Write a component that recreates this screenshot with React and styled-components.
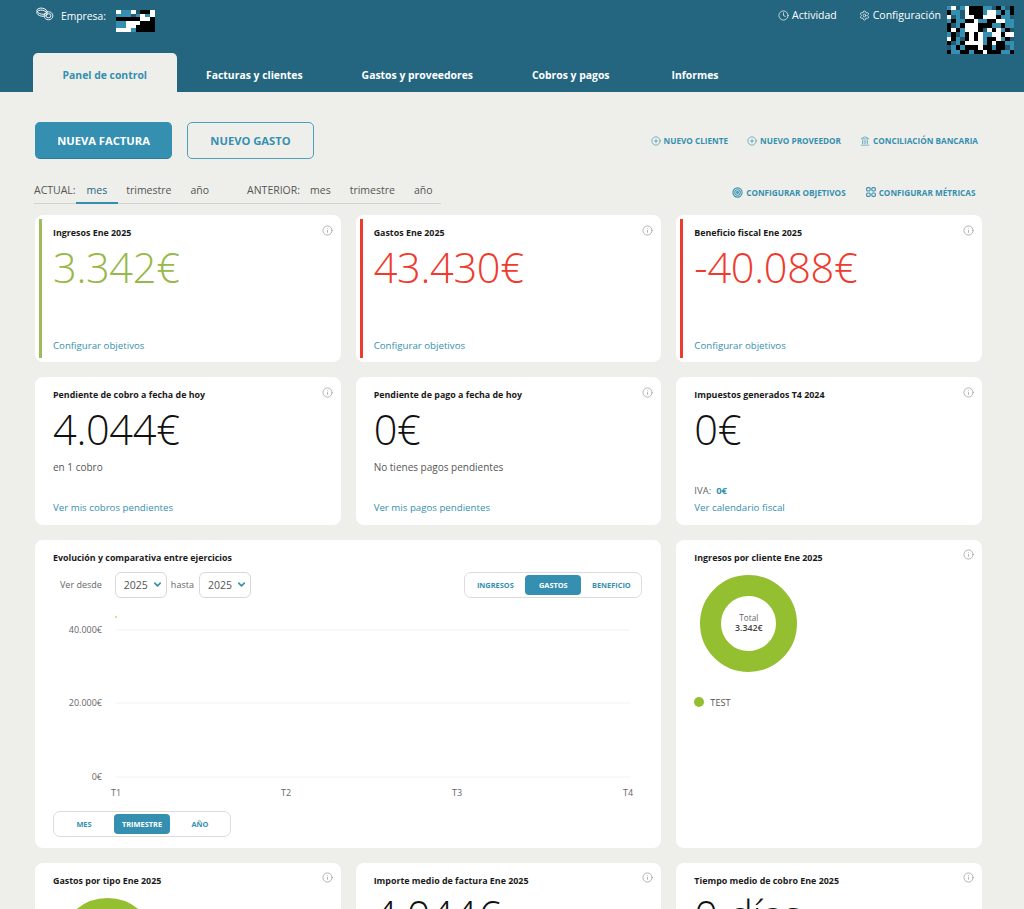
import React from "react";
import styled, { createGlobalStyle } from "styled-components";
import { Clock, Settings, CirclePlus, Landmark, Target, Info, ChevronDown } from "lucide-react";

const Global = createGlobalStyle`
  html, body { margin: 0; padding: 0; background: #eeefea; }
  * { box-sizing: border-box; }
  body { font-family: "Open Sans", "Liberation Sans", sans-serif; color: #222; }
`;

const PRIMARY = "#358fb0";
const HEADER = "#24667f";

const Page = styled.div`
  height: 909px;
  overflow: hidden;
  background: #eeefea;
`;
const Header = styled.header`
  height: 92px;
  background: ${HEADER};
  display: flex;
  flex-direction: column;
`;
const TopBar = styled.div`
  height: 53px;
  display: flex;
  justify-content: space-between;
  align-items: flex-start;
  padding: 6px 10px 0 36px;
  color: #fff;
  font-size: 10.5px;
`;
const CompanyArea = styled.div`
  display: flex;
  align-items: flex-start;
`;
const CompanyLabel = styled.span`
  margin: 3px 10px 0 7px;
  font-size: 10.3px;
  line-height: 14px;
`;
const CoinsSvg = styled.svg`
  margin-top: 1px;
`;
const UserArea = styled.div`
  display: flex;
  align-items: flex-start;
`;
const TopLink = styled.a`
  display: flex;
  align-items: center;
  gap: 3px;
  margin: 2px 0 0 ${(p) => p.$gap}px;
  line-height: 14px;
  color: #fff;
`;
const Mosaic = styled.svg`
  display: block;
  flex: none;
  margin: ${(p) => p.$margin};
`;
const Tabs = styled.nav`
  display: flex;
  height: 39px;
  padding-left: 33px;
`;
const Tab = styled.a`
  display: flex;
  align-items: center;
  padding: 4px 29.5px 0;
  font-size: 10.4px;
  font-weight: 700;
  border-radius: 5px 5px 0 0;
  color: ${(p) => (p.$active ? PRIMARY : "#fff")};
  background: ${(p) => (p.$active ? "#eeefea" : "transparent")};
  &:last-child {
    padding-left: 32.5px;
  }
`;
const Main = styled.main`
  padding: 30px 42px 0 35px;
`;
const ActionRow = styled.div`
  display: flex;
  align-items: center;
  justify-content: space-between;
  height: 37px;
`;
const ButtonGroup = styled.div`
  display: flex;
  gap: 15px;
`;
const BigButton = styled.button`
  height: 37px;
  width: ${(p) => p.$width}px;
  border-radius: 5px;
  border: 1px solid ${(p) => (p.$filled ? PRIMARY : "#4f9fbc")};
  border-bottom-color: ${(p) => (p.$filled ? "#2c7d9b" : "#4f9fbc")};
  font-family: inherit;
  font-size: 11.2px;
  font-weight: 700;
  padding: 0;
  color: ${(p) => (p.$filled ? "#fff" : PRIMARY)};
  background: ${(p) => (p.$filled ? PRIMARY : "transparent")};
`;
const QuickLinks = styled.div`
  display: flex;
  gap: ${(p) => p.$gap}px;
  padding-right: ${(p) => p.$right}px;
  margin-top: ${(p) => p.$top || 0}px;
`;
const QuickLink = styled.a`
  display: flex;
  align-items: center;
  gap: 3px;
  font-size: 8.2px;
  font-weight: 700;
  color: ${PRIMARY};
`;
const FilterRow = styled.div`
  display: flex;
  align-items: center;
  justify-content: space-between;
  height: 27px;
  margin: 18px 0 11px;
`;
const Periods = styled.div`
  display: flex;
  align-items: stretch;
  width: 407px;
  margin-left: -1px;
  height: 27px;
  border-bottom: 1px solid #d2d3ce;
  font-size: 10.5px;
  color: #555;
`;
const PeriodLabel = styled.span`
  display: flex;
  align-items: center;
  margin-left: ${(p) => p.$offset || 0}px;
  margin-right: ${(p) => p.$after || 0}px;
`;
const Period = styled.a`
  display: flex;
  align-items: center;
  padding: 0 11px;
  margin-bottom: -1px;
  color: ${(p) => (p.$active ? HEADER : "#555")};
  border-bottom: 2px solid ${(p) => (p.$active ? PRIMARY : "transparent")};
  & + & {
    margin-left: -3px;
  }
`;
const Grid = styled.div`
  display: grid;
  grid-template-columns: repeat(3, 1fr);
  gap: 15px;
`;
const Card = styled.section`
  position: relative;
  grid-column: span ${(p) => p.$span || 1};
  height: ${(p) => p.$height || 147}px;
  background: #fff;
  border-radius: 8px;
  padding: 11px 18px 9.5px;
  display: flex;
  flex-direction: column;
`;
const Accent = styled.span`
  position: absolute;
  left: 4px;
  top: 4px;
  bottom: 4px;
  width: 3px;
  background: ${(p) => p.$color};
`;
const InfoBadge = styled.span`
  position: absolute;
  right: 8px;
  top: 9.5px;
  display: flex;
  color: #9a9a9a;
`;
const CardTitle = styled.h3`
  margin: 0;
  font-size: 8.9px;
  font-weight: 700;
  line-height: 13px;
  color: #1a1a1a;
`;
const BigValue = styled.div`
  margin-top: 0;
  font-size: 41.5px;
  font-weight: 300;
  line-height: 56px;
  letter-spacing: -0.3px;
  color: ${(p) => p.$color || "#111"};
`;
const Note = styled.p`
  margin: 3px 0 0;
  font-size: 10px;
  line-height: 14px;
  color: #555;
`;
const CardFooter = styled.div`
  margin-top: auto;
  display: flex;
  flex-direction: column;
  gap: 3px;
`;
const TaxLine = styled.div`
  display: flex;
  gap: 5px;
  font-size: 9.5px;
  line-height: 14px;
  color: #666;
`;
const TaxValue = styled.b`
  color: ${PRIMARY};
  font-weight: 700;
`;
const CardLink = styled.a`
  font-size: 9.7px;
  line-height: 14px;
  color: ${PRIMARY};
`;
const Controls = styled.div`
  display: flex;
  align-items: center;
  justify-content: space-between;
  margin-top: 8px;
  padding-right: 1px;
`;
const Range = styled.div`
  display: flex;
  align-items: center;
  font-size: 9px;
  color: #666;
`;
const RangeText = styled.span`
  margin: ${(p) => p.$margin};
`;
const SelectBox = styled.div`
  display: flex;
  align-items: center;
  justify-content: space-between;
  width: 52px;
  height: 26px;
  padding: 0 3px 0 8px;
  border: 1px solid #d8d8d8;
  border-radius: 6px;
  font-size: 10.5px;
  color: #555;
`;
const Segmented = styled.div`
  display: grid;
  grid-template-columns: repeat(3, 1fr);
  width: 178px;
  height: 26px;
  padding: 2px 1px;
  border: 1.5px solid #dcdcdc;
  border-radius: 7px;
`;
const Segment = styled.a`
  display: flex;
  align-items: center;
  justify-content: center;
  margin: 0 1px;
  border-radius: 4px;
  font-size: 7.4px;
  font-weight: 700;
  color: ${(p) => (p.$active ? "#fff" : PRIMARY)};
  background: ${(p) => (p.$active ? PRIMARY : "transparent")};
`;
const Chart = styled.svg`
  display: block;
  margin-top: 12px;
  margin-bottom: 11px;
  flex: none;
  font-family: "Open Sans", "Liberation Sans", sans-serif;
`;
const Donut = styled.div`
  width: 97px;
  height: 97px;
  margin: ${(p) => p.$margin};
  flex: none;
  border: 21px solid #93bf30;
  border-radius: 50%;
  display: flex;
  flex-direction: column;
  align-items: center;
  justify-content: center;
`;
const DonutLabel = styled.span`
  font-size: 8.2px;
  line-height: 11px;
  color: #666;
`;
const DonutTotal = styled.span`
  font-size: 8.8px;
  font-weight: 600;
  line-height: 11px;
  color: #444;
`;
const Legend = styled.div`
  display: flex;
  align-items: center;
  gap: 6px;
  margin-top: 24px;
  font-size: 9.2px;
  color: #555;
`;
const LegendDot = styled.span`
  width: 10px;
  height: 10px;
  border-radius: 50%;
  background: #93bf30;
`;

const COLORS = { t: "#358fb0", b: "#000", w: "#fff", ".": "transparent", d: "#1f5b73" };

function Pixels({ rows, width, height, margin }) {
  const cols = rows[0].length;
  return (
    <Mosaic $margin={margin} width={width} height={height} viewBox={`0 0 ${cols} ${rows.length}`} preserveAspectRatio="none" shapeRendering="crispEdges" aria-hidden="true">
      {rows.flatMap((row, y) =>
        row.split("").map((c, x) => <rect key={`${x}-${y}`} x={x} y={y} width="1.02" height="1.02" fill={COLORS[c]} />)
      )}
    </Mosaic>
  );
}

const AVATAR = [
  "twdtwbbbttdbtdb",
  "bttdwbbbtwwtbtb",
  "wdtdwwbbwwwbttd",
  "tbttbbwttbbwwtt",
  "bdtbwwwbbbttbtt",
  "bwbtwwwbdwbwtbd",
  "tbdtbwbwttwwbww",
  "wbtdbwbwtbbwtbd",
  "bdtbwwwwtbwbbtt",
  "dtbtbbbwbbtbbdt",
  "bttbbtbbwbbbttb",
];
const COMPANY = [
  "wttwdbbw",
  "tttdtwtw",
  "bbbbbwwb",
  "ttwwwbbb",
  "ttwwbbbb",
  "wwwtbbbb",
];

function Coins() {
  return (
    <CoinsSvg width="18" height="14" viewBox="0 0 18 14" fill="none" stroke="#fff" strokeWidth="0.9" aria-hidden="true">
      <ellipse cx="6" cy="4.2" rx="5.2" ry="3" transform="rotate(10 6 4.2)" />
      <ellipse cx="6" cy="6.2" rx="5.2" ry="3" transform="rotate(10 6 6.2)" />
      <ellipse cx="12.5" cy="8.8" rx="4.4" ry="4" />
      <ellipse cx="12.5" cy="8.8" rx="2.4" ry="2.1" />
    </CoinsSvg>
  );
}

function MetricsIcon() {
  return (
    <svg width="10" height="10" viewBox="0 0 10 10" fill="none" stroke="currentColor" strokeWidth="1.1" aria-hidden="true">
      <rect x="0.6" y="0.6" width="3.6" height="3.4" rx="1.2" />
      <rect x="5.8" y="0.6" width="3.6" height="3.4" rx="1.2" />
      <rect x="0.6" y="6" width="3.6" height="3.4" rx="1.2" />
      <rect x="5.8" y="6" width="3.6" height="3.4" rx="1.2" />
    </svg>
  );
}

function MetricCard({ title, value, color, accent, note, footer, tax, height }) {
  return (
    <Card $height={height}>
      {accent && <Accent $color={accent} />}
      <InfoBadge><Info size={11} strokeWidth={1.6} /></InfoBadge>
      <CardTitle>{title}</CardTitle>
      <BigValue $color={color}>{value}</BigValue>
      {note && <Note>{note}</Note>}
      {footer && (
        <CardFooter>
          {tax && <TaxLine>IVA: <TaxValue>{tax}</TaxValue></TaxLine>}
          <CardLink>{footer}</CardLink>
        </CardFooter>
      )}
    </Card>
  );
}

function Seg({ items, active }) {
  return (
    <Segmented>
      {items.map((i) => <Segment key={i} $active={i === active}>{i}</Segment>)}
    </Segmented>
  );
}

function Select({ value }) {
  return (
    <SelectBox>
      {value}
      <ChevronDown size={11} strokeWidth={3.5} color={PRIMARY} />
    </SelectBox>
  );
}

function EvolutionChart() {
  const ys = [{ y: 20, t: "40.000€" }, { y: 93, t: "20.000€" }, { y: 167, t: "0€" }];
  const xs = [{ x: 63, t: "T1" }, { x: 233, t: "T2" }, { x: 404, t: "T3" }, { x: 575, t: "T4" }];
  return (
    <Chart width="590" height="190" viewBox="0 0 590 190" role="img">
      {ys.map((l) => (
        <g key={l.t}>
          <line x1="63" x2="577" y1={l.y} y2={l.y} stroke="#f2f2f0" strokeWidth="1" />
          <text x="49" y={l.y + 3} textAnchor="end" fontSize="9" fill="#666">{l.t}</text>
        </g>
      ))}
      {xs.map((l) => (
        <text key={l.t} x={l.x} y="186" textAnchor="middle" fontSize="9" fill="#666">{l.t}</text>
      ))}
      <circle cx="63" cy="7" r="0.8" fill="#93bf30" />
    </Chart>
  );
}

export default function App() {
  return (
    <Page>
      <Global />
      <Header>
        <TopBar>
          <CompanyArea>
            <Coins />
            <CompanyLabel>Empresa:</CompanyLabel>
            <Pixels rows={COMPANY} width={39} height={22} margin="4px 0 0 0" />
          </CompanyArea>
          <UserArea>
            <TopLink $gap={0}><Clock size={11} strokeWidth={1.5} /> Actividad</TopLink>
            <TopLink $gap={22}><Settings size={11} strokeWidth={1.5} /> Configuración</TopLink>
            <Pixels rows={AVATAR} width={67} height={48} margin="0 0 0 6px" />
          </UserArea>
        </TopBar>
        <Tabs>
          <Tab $active>Panel de control</Tab>
          <Tab>Facturas y clientes</Tab>
          <Tab>Gastos y proveedores</Tab>
          <Tab>Cobros y pagos</Tab>
          <Tab>Informes</Tab>
        </Tabs>
      </Header>
      <Main>
        <ActionRow>
          <ButtonGroup>
            <BigButton $filled $width={137}>NUEVA FACTURA</BigButton>
            <BigButton $width={127}>NUEVO GASTO</BigButton>
          </ButtonGroup>
          <QuickLinks $gap={19} $right={4}>
            <QuickLink><CirclePlus size={10} strokeWidth={1.5} /> NUEVO CLIENTE</QuickLink>
            <QuickLink><CirclePlus size={10} strokeWidth={1.5} /> NUEVO PROVEEDOR</QuickLink>
            <QuickLink><Landmark size={10} strokeWidth={1.5} /> CONCILIACIÓN BANCARIA</QuickLink>
          </QuickLinks>
        </ActionRow>
        <FilterRow>
          <Periods>
            <PeriodLabel>ACTUAL:</PeriodLabel>
            <Period $active>mes</Period>
            <Period>trimestre</Period>
            <Period>año</Period>
            <PeriodLabel $offset={27} $after={-1}>ANTERIOR:</PeriodLabel>
            <Period>mes</Period>
            <Period>trimestre</Period>
            <Period>año</Period>
          </Periods>
          <QuickLinks $gap={20} $right={6.5} $top={3}>
            <QuickLink><Target size={11} strokeWidth={2.4} /> CONFIGURAR OBJETIVOS</QuickLink>
            <QuickLink><MetricsIcon /> CONFIGURAR MÉTRICAS</QuickLink>
          </QuickLinks>
        </FilterRow>
        <Grid>
          <MetricCard title="Ingresos Ene 2025" value="3.342€" color="#97b84a" accent="#9fbc5a" footer="Configurar objetivos" />
          <MetricCard title="Gastos Ene 2025" value="43.430€" color="#ef3b2d" accent="#ef3b2d" footer="Configurar objetivos" />
          <MetricCard title="Beneficio fiscal Ene 2025" value="-40.088€" color="#ef3b2d" accent="#ef3b2d" footer="Configurar objetivos" />
          <MetricCard height={147.5} title="Pendiente de cobro a fecha de hoy" value="4.044€" note="en 1 cobro" footer="Ver mis cobros pendientes" />
          <MetricCard height={147.5} title="Pendiente de pago a fecha de hoy" value="0€" note="No tienes pagos pendientes" footer="Ver mis pagos pendientes" />
          <MetricCard height={147.5} title="Impuestos generados T4 2024" value="0€" tax="0€" footer="Ver calendario fiscal" />
          <Card $span={2} $height={308}>
            <CardTitle>Evolución y comparativa entre ejercicios</CardTitle>
            <Controls>
              <Range>
                <RangeText $margin="0 13px 0 7px">Ver desde</RangeText>
                <Select value="2025" />
                <RangeText $margin="0 5px 0 4px">hasta</RangeText>
                <Select value="2025" />
              </Range>
              <Seg items={["INGRESOS", "GASTOS", "BENEFICIO"]} active="GASTOS" />
            </Controls>
            <EvolutionChart />
            <Seg items={["MES", "TRIMESTRE", "AÑO"]} active="TRIMESTRE" />
          </Card>
          <Card $height={308}>
            <InfoBadge><Info size={11} strokeWidth={1.6} /></InfoBadge>
            <CardTitle>Ingresos por cliente Ene 2025</CardTitle>
            <Donut $margin="11px 0 0 6px">
              <DonutLabel>Total</DonutLabel>
              <DonutTotal>3.342€</DonutTotal>
            </Donut>
            <Legend><LegendDot /> TEST</Legend>
          </Card>
          <Card>
            <InfoBadge><Info size={11} strokeWidth={1.6} /></InfoBadge>
            <CardTitle>Gastos por tipo Ene 2025</CardTitle>
            <Donut $margin="11px 0 0 6px" />
          </Card>
          <MetricCard title="Importe medio de factura Ene 2025" value="4.044€" />
          <MetricCard title="Tiempo medio de cobro Ene 2025" value="0 días" />
        </Grid>
      </Main>
    </Page>
  );
}
